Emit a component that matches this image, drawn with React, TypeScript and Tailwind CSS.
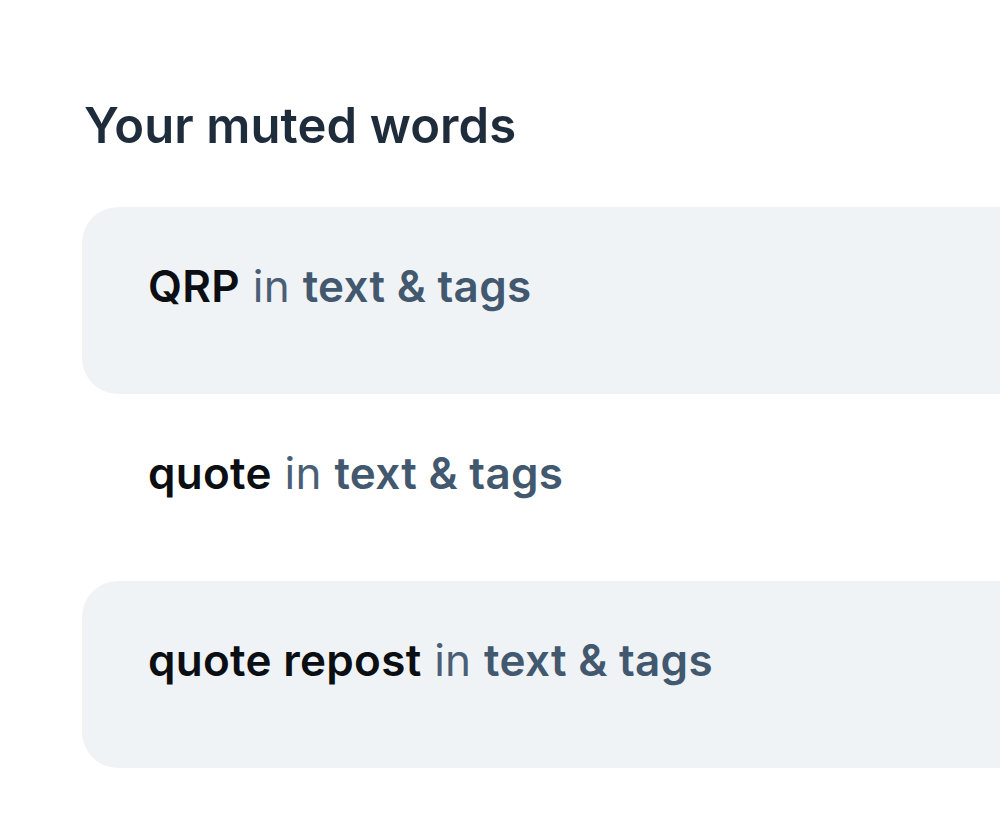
import React from "react";

const words = [
  { word: "QRP", shaded: true },
  { word: "quote", shaded: false },
  { word: "quote repost", shaded: true },
];

export default function App() {
  return (
    <div
      className="w-[1000px] h-[838px] overflow-hidden bg-white"
      style={{ fontFamily: "Inter, 'Noto Sans', sans-serif" }}
    >
      <div className="pl-[82px] pt-[96px]">
        <h2 className="pl-[2px] text-[49px] leading-[60px] font-semibold text-[#1f2c3b] tracking-[0.1px]">
          Your muted words
        </h2>
        <div className="mt-[51px] mr-[-60px] flex flex-col">
          {words.map((w) => (
            <div
              key={w.word}
              className={`h-[187px] flex items-center pl-[66px] rounded-[36px] ${
                w.shaded ? "bg-[#f0f3f5]" : "bg-white"
              }`}
            >
              <p className="text-[44px] leading-none pb-[30px] tracking-[0.3px]">
                <span className="font-semibold text-[#0b0f14]">{w.word}</span>{" "}
                <span className="font-normal text-[#4a5f76]">in</span>{" "}
                <span className="font-semibold text-[#42586f]">text &amp; tags</span>
              </p>
            </div>
          ))}
        </div>
      </div>
    </div>
  );
}
